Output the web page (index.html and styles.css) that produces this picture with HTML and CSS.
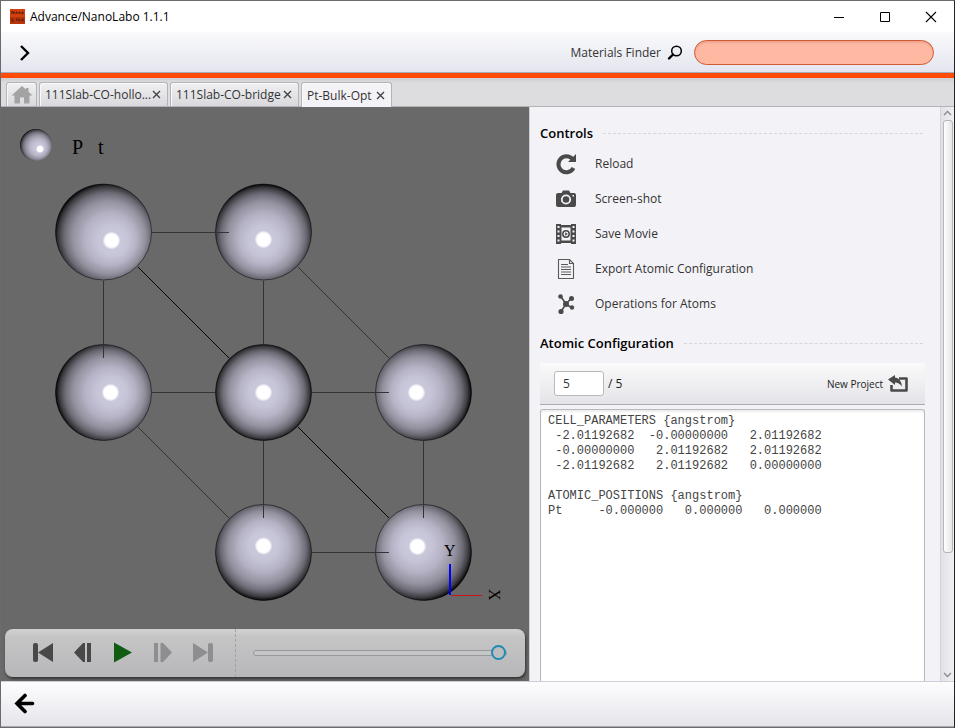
FILE: index.html
```html
<!DOCTYPE html>
<html lang="en">
<head>
    <meta charset="UTF-8">
    <meta name="viewport" content="width=device-width, initial-scale=1.0">
    <title>Advance/NanoLabo 1.1.1</title>
    <link rel="stylesheet" href="styles.css">
</head>
<body>
    <div class="window">
        <header class="title-bar">
            <svg class="app-icon" viewBox="0 0 15 15" aria-hidden="true">
                <rect width="15" height="15" fill="#d2400c"/>
                <rect y="8" width="15" height="7" fill="#b8340a"/>
                <path d="M2 5V2l2 3V2M6 5V3h1v2M9 5V3h1v2M12 3h1v2h-1zM2 9v3h2M6 10h1v2M9 9v3h1v-1M12 10h1v2h-1z" fill="none" stroke="#5d1d0c"/>
            </svg>
            <span class="app-title">Advance/NanoLabo 1.1.1</span>
            <button class="win-button" aria-label="Minimize"><svg width="12" height="12"><path d="M1 6.500h10" stroke="#000"/></svg></button>
            <button class="win-button" aria-label="Maximize"><svg width="12" height="12"><path d="M1.500 1.500h9v9h-9z" fill="none" stroke="#000"/></svg></button>
            <button class="win-button" aria-label="Close"><svg width="12" height="12"><path d="M1 1l10 10M11 1L1 11" stroke="#000" stroke-width="1.100"/></svg></button>
        </header>

        <div class="toolbar">
            <button class="icon-button" aria-label="Open menu">
                <svg width="12" height="18"><path d="M2 2l7 7-7 7" fill="none" stroke="#000" stroke-width="2.400"/></svg>
            </button>
            <label class="finder" for="finder">Materials Finder
                <svg width="16" height="16" viewBox="0 0 16 16"><circle cx="9.500" cy="6" r="4.800" fill="none" stroke="#000" stroke-width="1.500"/><path d="M6 9.500L2 13.500" stroke="#000" stroke-width="2.400" stroke-linecap="round"/></svg>
            </label>
            <input class="finder-input" id="finder" type="text">
        </div>

        <nav class="tabs">
            <button class="tab tab-home" aria-label="Home">
                <svg width="22" height="20" viewBox="0 0 22 20"><path d="M11 1L0.500 10.500h3V18.500h5.500v-6h4v6h5.500v-8h3L17.500 6.700V3h-2.500v1.500z" fill="#a3a3a3"/></svg>
            </button>
            <button class="tab">111Slab-CO-hollo...<svg width="9" height="9"><path d="M1 1l7 7M8 1L1 8" stroke="#444" stroke-width="1.400"/></svg></button>
            <button class="tab">111Slab-CO-bridge<svg width="9" height="9"><path d="M1 1l7 7M8 1L1 8" stroke="#444" stroke-width="1.400"/></svg></button>
            <button class="tab tab-active">Pt-Bulk-Opt<svg width="9" height="9"><path d="M1 1l7 7M8 1L1 8" stroke="#444" stroke-width="1.400"/></svg></button>
        </nav>

        <main class="content">
            <section class="viewer">
                
                <svg class="scene" width="528" height="520" viewBox="1 107 528 520">
                    <defs>
                        <radialGradient id="shade">
                            <stop offset="0" stop-color="#cfcde0"/>
                            <stop offset=".3" stop-color="#c6c4d7"/>
                            <stop offset=".5" stop-color="#b4b2c4"/>
                            <stop offset=".7" stop-color="#94929f"/>
                            <stop offset=".84" stop-color="#6b6a74"/>
                            <stop offset=".94" stop-color="#38383c"/>
                            <stop offset="1" stop-color="#040404"/>
                        </radialGradient>
                        <radialGradient id="mid" href="#shade" r=".51"/>
                        <radialGradient id="top" href="#shade" cy=".53" fy=".62" r=".53"/>
                        <radialGradient id="corner" href="#shade" cx=".53" cy=".53" fx=".62" fy=".62" r=".54"/>
                        <radialGradient id="left" href="#shade" cx=".53" fx=".61" r=".53"/>
                        <radialGradient id="right" href="#shade" cx=".47" fx=".39" r=".53"/>
                        <radialGradient id="bottom" href="#shade" cy=".47" fy=".4" r=".53"/>
                        <radialGradient id="far" href="#shade" cx=".47" cy=".47" fx=".4" fy=".4" r=".54"/>
                        <radialGradient id="glow">
                            <stop offset=".72" stop-color="#fff"/>
                            <stop offset="1" stop-color="#fff" stop-opacity="0"/>
                        </radialGradient>
                    </defs>

                    <circle cx="36" cy="145" r="16" fill="url(#corner)"/>
                    <circle cx="40" cy="149" r="4" fill="url(#glow)"/>
                    <text class="legend" y="154"><tspan x="72">P</tspan> <tspan x="98">t</tspan></text>

                    <g stroke="#000" stroke-opacity=".5">
                        <circle cx="103.500" cy="232" r="48" fill="url(#corner)"/>
                        <circle cx="263.500" cy="232" r="48" fill="url(#top)"/>
                        <circle cx="103.500" cy="392.500" r="48" fill="url(#left)"/>
                        <circle cx="263.500" cy="392.500" r="48" fill="url(#mid)"/>
                        <circle cx="423.500" cy="392.500" r="48" fill="url(#right)"/>
                        <circle cx="263.500" cy="552.500" r="48" fill="url(#bottom)"/>
                        <circle cx="423.500" cy="552.500" r="48" fill="url(#far)"/>
                    </g>

                    <g fill="url(#glow)">
                        <circle cx="111.500" cy="240.500" r="9"/>
                        <circle cx="263.500" cy="239.500" r="9"/>
                        <circle cx="110.500" cy="392.500" r="9"/>
                        <circle cx="263.500" cy="392.500" r="9"/>
                        <circle cx="416.500" cy="392.500" r="9"/>
                        <circle cx="263.500" cy="546" r="9"/>
                        <circle cx="417.500" cy="546.500" r="9"/>
                    </g>

                    <path class="bond" d="M152 232.500H229M152 392.500H215M312 392.500H389M312 552.500H389M103.500 281V358M263.500 281V344M263.500 441V518M423.500 441V518M298 267l91 91M138 427l91 91"/>
                    <path class="bond bond-near" d="M138 267l91 91M298 427l91 91"/>

                    <rect x="451" y="595" width="31" height="1" fill="#c81414"/>
                    <rect x="449" y="564" width="2" height="31" fill="#00f"/>
                    <text class="axis" x="444" y="556">Y</text>
                    <text class="axis" transform="translate(489 589) rotate(90)">X</text>
                </svg>

                <div class="player">
                    <div class="player-buttons">
                        <button aria-label="First frame"><svg width="22" height="22"><rect x="1" y="1" width="5" height="19" rx="2"/><path d="M6 10.500L21 1v19z"/></svg></button>
                        <button aria-label="Previous frame"><svg width="22" height="22"><path d="M2 10.500L11 1h2v19h-2z"/><rect x="15" y="1" width="4" height="19"/></svg></button>
                        <button class="play" aria-label="Play"><svg width="22" height="22"><path d="M2 0.500L20 10.500 2 20.500z"/></svg></button>
                        <button aria-label="Next frame" disabled><svg width="22" height="22"><rect x="2" y="1" width="4" height="19"/><path d="M20 10.500L11 1H8.500v19H11z"/></svg></button>
                        <button aria-label="Last frame" disabled><svg width="22" height="22"><path d="M1 1l15 9.500L1 20z"/><rect x="16" y="1" width="5" height="19" rx="2"/></svg></button>
                    </div>
                    <div class="player-track">
                        <input type="range" min="1" max="5" value="5" aria-label="Frame">
                    </div>
                </div>
            </section>

            <aside class="side">
                <div class="side-body">
                    <h2>Controls</h2>
                    <div class="actions">
                        <button><svg width="22" height="22" viewBox="0 0 22 22"><path d="M17.500 6A8 8 0 1 0 18.500 15" fill="none" stroke="#4a4a4a" stroke-width="4"/><path d="M21 1v8h-8z" fill="#4a4a4a"/></svg>Reload</button>
                        <button><svg width="22" height="22" viewBox="0 0 22 22"><path d="M3 5h3.500l1.500-2.500h6L15.500 5H19q2 0 2 2v10q0 2-2 2H3q-2 0-2-2V7q0-2 2-2z" fill="#4a4a4a"/><circle cx="11" cy="11.500" r="4.200" fill="none" stroke="#f3f2f7" stroke-width="1.800"/><rect x="17.500" y="7" width="1.500" height="1.500" fill="#f3f2f7"/></svg>Screen-shot</button>
                        <button><svg width="22" height="22" viewBox="0 0 22 22"><path d="M1 1h20v20H1z" fill="#4a4a4a"/><path d="M2.500 3h2v2h-2zM2.500 7.500h2v2h-2zM2.500 12h2v2h-2zM2.500 16.500h2v2h-2zM17.500 3h2v2h-2zM17.500 7.500h2v2h-2zM17.500 12h2v2h-2zM17.500 16.500h2v2h-2zM6.500 4.500h9v13h-9zM6 1h10v1H6zM6 20h10v1H6z" fill="#f3f2f7"/><circle cx="11" cy="11" r="3.200" fill="none" stroke="#4a4a4a" stroke-width="1.500"/><path d="M10.200 9.300l2.600 1.700-2.600 1.700z" fill="#4a4a4a"/></svg>Save Movie</button>
                        <button><svg width="22" height="22" viewBox="0 0 22 22"><path d="M3.500 1.500h11l4 4v15h-15zM14.500 1.500v4h4M6 6.500h7M6 9h10M6 11.500h10M6 14h10M6 16.500h10" fill="none" stroke="#5a5a5a" stroke-width="1.100"/></svg>Export Atomic Configuration</button>
                        <button><svg width="22" height="22" viewBox="0 0 22 22"><path d="M5.500 3l5.500 8 5.500-6M6 18.500l5-7.500 6 4" fill="none" stroke="#4a4a4a" stroke-width="1.600"/><g fill="#4a4a4a"><circle cx="5.500" cy="3.500" r="2.300"/><circle cx="16.500" cy="5.500" r="2.500"/><circle cx="11" cy="11" r="3"/><circle cx="17" cy="14.500" r="2.200"/><circle cx="6" cy="18.500" r="2.600"/></g></svg>Operations for Atoms</button>
                    </div>

                    <h2>Atomic Configuration</h2>
                    <div class="frame-bar">
                        <input type="text" id="frame" value="5">
                        <label for="frame">/ 5</label>
                        <button class="new-project">New Project
                            <svg width="22" height="20" viewBox="0 0 22 20"><path d="M12 4.500h7.500v12H4.500V11" fill="none" stroke="#4a4a4a" stroke-width="2.600" stroke-linejoin="round"/><path d="M1 5.500L8 1v2.500q6 .5 7 9-3-4-7-4V11z" fill="#4a4a4a"/></svg>
                        </button>
                    </div>
                    <textarea class="config" aria-label="Atomic Configuration" readonly spellcheck="false">CELL_PARAMETERS {angstrom}
 -2.01192682  -0.00000000   2.01192682
 -0.00000000   2.01192682   2.01192682
 -2.01192682   2.01192682   0.00000000

ATOMIC_POSITIONS {angstrom}
Pt     -0.000000   0.000000   0.000000</textarea>
                </div>
                <div class="scrollbar">
                    <svg width="9" height="6"><path d="M1 5l3.500-3.500L8 5" fill="none" stroke="#8a8a8e" stroke-width="1.300"/></svg>
                    <div class="scroll-track"><div class="scroll-thumb"></div></div>
                    <svg width="9" height="6"><path d="M1 1l3.500 3.500L8 1" fill="none" stroke="#8a8a8e" stroke-width="1.300"/></svg>
                </div>
            </aside>
        </main>

        <footer class="footer">
            <button class="icon-button" aria-label="Back">
                <svg width="22" height="22"><path d="M11 2.500L3 10.500l8 8M3.500 10.500H18.500" fill="none" stroke="#000" stroke-width="3.600" stroke-linecap="round"/></svg>
            </button>
        </footer>
    </div>
</body>
</html>
```
FILE: styles.css
```css
* {
    box-sizing: border-box;
}

body {
    margin: 0;
    font-family: "Open Sans", "Noto Sans", sans-serif;
    font-size: 12px;
    color: #333;
}

button {
    padding: 0;
    border: none;
    background: none;
    color: inherit;
    font: inherit;
    cursor: pointer;
}

svg {
    display: block;
    flex: none;
}

.window {
    display: flex;
    flex-direction: column;
    height: 100vh;
    border: 1px solid #6b6b6b;
    border-right-color: #222;
    overflow: hidden;
}

/* title bar */
.title-bar {
    display: flex;
    align-items: center;
    height: 31px;
    flex: none;
    padding-left: 9px;
    background: #fff;
    color: #000;
}

.app-icon {
    width: 15px;
    height: 15px;
    margin-right: 5px;
}

.app-title {
    flex: 1;
}

.win-button {
    display: flex;
    align-items: center;
    justify-content: center;
    width: 46px;
    height: 30px;
}

/* toolbar */
.toolbar {
    display: flex;
    align-items: center;
    flex: none;
    height: 46px;
    padding: 0 20px 0 18px;
    background: linear-gradient(#fafafc, #e3e4ee);
    border-bottom: 5px solid #ff4a08;
    box-shadow: inset 0 -1px #a9adb8;
}

.finder {
    display: flex;
    align-items: center;
    gap: 6px;
    margin-left: auto;
}

.finder-input {
    width: 240px;
    height: 25px;
    margin-left: 11px;
    padding: 0 12px;
    border: 1px solid #d05a34;
    border-radius: 13px;
    background: #ffb9a3;
    box-shadow: inset 0 2px 2px #eda48e;
    font: inherit;
}

/* tabs */
.tabs {
    display: flex;
    align-items: flex-end;
    gap: 2px;
    flex: none;
    height: 29px;
    padding-left: 5px;
    background: linear-gradient(#cfcfd3, #dddddf 5px);
    border-bottom: 1px solid #b4b4b8;
}

.tab {
    display: flex;
    align-items: center;
    justify-content: space-between;
    width: 129px;
    height: 24px;
    padding: 0 6px 0 5px;
    border: 1px solid #b4b4b8;
    border-bottom: none;
    border-radius: 3px 3px 0 0;
    background: linear-gradient(#f0f0f3, #d9d9dd);
    box-shadow: inset 1px 1px #fafafc;
    white-space: nowrap;
}

.tab-home {
    width: 31px;
    justify-content: center;
    padding: 0;
}

.tab-active {
    width: 91px;
    height: 25px;
    margin-bottom: -1px;
    background: #f3f2f7;
}

/* main area */
.content {
    display: flex;
    flex: 1;
    min-height: 0;
}

.viewer {
    position: relative;
    flex: 1;
    min-width: 0;
    overflow: hidden;
    background: #696969;
}

.legend {
    font: 20px "Liberation Serif", serif;
    fill: #000;
}

.axis {
    font: 16px "Liberation Serif", serif;
    fill: #000;
}

.bond {
    fill: none;
    stroke: #333;
    stroke-width: 1;
}

.bond-near {
    stroke: #000;
}

.player {
    position: absolute;
    left: 4px;
    right: 4px;
    bottom: 4px;
    display: flex;
    height: 48px;
    border-radius: 8px;
    background: linear-gradient(#d2d2d2, #c5c5c6 8px, #b7b7ba);
    box-shadow: 1px 2px 3px #333;
}

.player-buttons {
    display: flex;
    align-items: center;
    gap: 18px;
    padding: 0 21px 0 27px;
    border-right: 1px dashed #a2a2a4;
    fill: #484848;
}

.player-buttons .play {
    fill: #125c12;
}

.player-buttons button:disabled {
    fill: #8e8e90;
}

.player-track {
    display: flex;
    align-items: center;
    flex: 1;
    padding: 0 18px 0 17px;
}

input[type="range"] {
    appearance: none;
    width: 100%;
    height: 18px;
    margin: 0;
    background: none;
}

input[type="range"]::-webkit-slider-runnable-track {
    height: 6px;
    border: 1px solid #98989b;
    border-radius: 3px;
    background: #c6c6c8;
}

input[type="range"]::-webkit-slider-thumb {
    appearance: none;
    width: 15px;
    height: 15px;
    margin-top: -6px;
    border: 2px solid #1e8cb4;
    border-radius: 50%;
    background: #bdbdc0;
}

/* side panel */
.side {
    display: flex;
    flex: 0 0 425px;
    overflow: hidden;
    border-left: 1px solid #d0cfd6;
    background: #f3f2f7;
}

.side-body {
    display: flex;
    flex-direction: column;
    flex: 1;
    padding: 16px 15px 0 10px;
}

h2 {
    display: flex;
    align-items: center;
    gap: 10px;
    height: 20px;
    margin: 0;
    color: #000;
    font-size: 13px;
    font-weight: 600;
    line-height: 20px;
}

h2::after {
    content: "";
    flex: 1;
    margin-right: 2px;
    border-top: 1px dashed #d6d6da;
}

.actions {
    display: flex;
    flex-direction: column;
    padding: 3px 0 12px 15px;
}

.actions button {
    display: flex;
    align-items: center;
    gap: 18px;
    height: 35px;
}

.frame-bar {
    display: flex;
    align-items: center;
    gap: 4px;
    flex: none;
    height: 42px;
    margin: 10px 0 4px;
    padding: 0 16px 0 14px;
    border-bottom: 1px solid #acacb2;
    background: linear-gradient(#fafafa, #e4e3e8);
    color: #222;
}

.frame-bar input {
    width: 50px;
    height: 25px;
    padding: 0 8px;
    border: 1px solid #b9b9bd;
    border-radius: 3px;
    background: #fff;
    color: #333;
    font: inherit;
}

.new-project {
    display: flex;
    align-items: center;
    gap: 4px;
    margin-left: auto;
    font-size: 10px;
}

.config {
    flex: 1;
    width: 100%;
    padding: 4px 7px;
    border: 1px solid #b9b9bd;
    border-bottom: none;
    border-radius: 3px 3px 0 0;
    outline: none;
    background: #fff;
    box-shadow: inset 0 2px 2px #eee;
    color: #444;
    font: 12px/15px "Liberation Mono", monospace;
    resize: none;
    overflow: hidden;
}

.scrollbar {
    display: flex;
    flex-direction: column;
    align-items: center;
    flex: 0 0 14px;
    padding: 3px 0;
    border-left: 1px solid #d3d2d8;
    background: linear-gradient(90deg, #e2e1e7, #f0eff4);
}

.scroll-track {
    flex: 1;
    width: 10px;
    padding: 4px 0;
}

.scroll-thumb {
    height: 79%;
    border: 1px solid #b5b5ba;
    border-radius: 3px;
    background: linear-gradient(90deg, #fdfdfd, #e6e6e9);
}

/* footer */
.footer {
    display: flex;
    align-items: center;
    flex: none;
    height: 46px;
    padding-left: 13px;
    border-top: 1px solid #cfced6;
    border-bottom: 1px solid #a9a9b0;
    background: linear-gradient(#fdfdfe, #e5e4ea);
}
```
